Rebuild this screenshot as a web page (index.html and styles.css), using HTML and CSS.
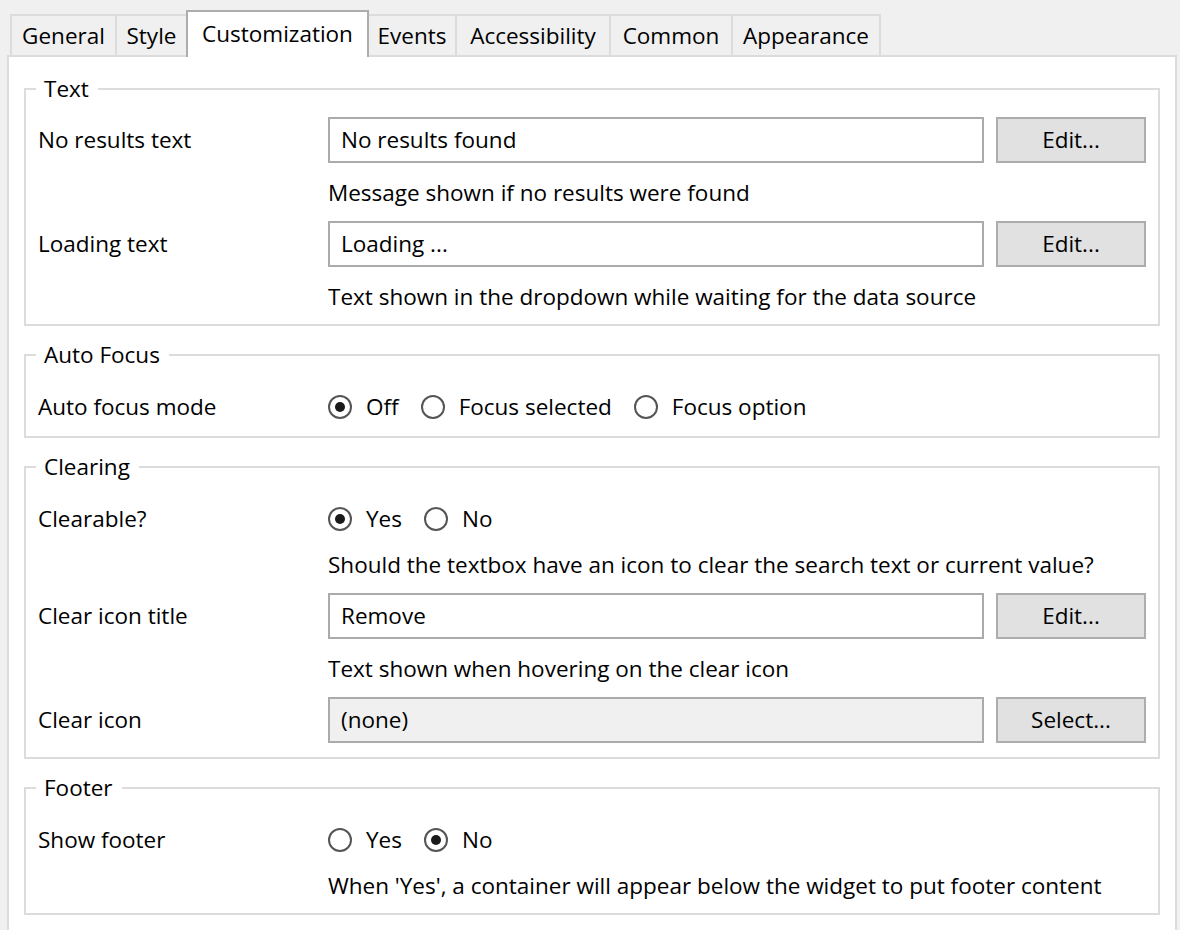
FILE: index.html
```html
<!DOCTYPE html>
<html lang="en">
<head>
<meta charset="utf-8">
<title>Customization</title>
<link rel="stylesheet" href="styles.css">
</head>
<body>
<div class="tabs">
  <div class="tab tab-general">General</div>
  <div class="tab tab-style">Style</div>
  <div class="tab tab-custom active">Customization</div>
  <div class="tab tab-events">Events</div>
  <div class="tab tab-access">Accessibility</div>
  <div class="tab tab-common">Common</div>
  <div class="tab tab-appearance">Appearance</div>
</div>
<div class="panel">
  <fieldset class="group">
    <legend>Text</legend>
    <div class="row">
      <div class="label">No results text</div>
      <div class="input">No results found</div>
      <div class="button">Edit...</div>
    </div>
    <div class="hint">Message shown if no results were found</div>
    <div class="row">
      <div class="label">Loading text</div>
      <div class="input">Loading ...</div>
      <div class="button">Edit...</div>
    </div>
    <div class="hint">Text shown in the dropdown while waiting for the data source</div>
  </fieldset>

  <fieldset class="group">
    <legend>Auto Focus</legend>
    <div class="row radio-row">
      <div class="label">Auto focus mode</div>
      <div class="radios">
        <span class="radio checked"></span><span class="radio-label">Off</span>
        <span class="radio"></span><span class="radio-label">Focus selected</span>
        <span class="radio"></span><span class="radio-label">Focus option</span>
      </div>
    </div>
  </fieldset>

  <fieldset class="group">
    <legend>Clearing</legend>
    <div class="row radio-row">
      <div class="label">Clearable?</div>
      <div class="radios">
        <span class="radio checked"></span><span class="radio-label">Yes</span>
        <span class="radio"></span><span class="radio-label">No</span>
      </div>
    </div>
    <div class="hint">Should the textbox have an icon to clear the search text or current value?</div>
    <div class="row">
      <div class="label">Clear icon title</div>
      <div class="input">Remove</div>
      <div class="button">Edit...</div>
    </div>
    <div class="hint">Text shown when hovering on the clear icon</div>
    <div class="row">
      <div class="label">Clear icon</div>
      <div class="input readonly">(none)</div>
      <div class="button">Select...</div>
    </div>
  </fieldset>

  <fieldset class="group">
    <legend>Footer</legend>
    <div class="row radio-row">
      <div class="label">Show footer</div>
      <div class="radios">
        <span class="radio"></span><span class="radio-label">Yes</span>
        <span class="radio checked"></span><span class="radio-label">No</span>
      </div>
    </div>
    <div class="hint">When 'Yes', a container will appear below the widget to put footer content</div>
  </fieldset>
</div>
</body>
</html>
```
FILE: styles.css
```css
html, body {
  margin: 0;
  padding: 0;
  background: #f0f0f0;
}

body {
  font-family: "Open Sans", "Noto Sans", sans-serif;
  font-size: 22.5px;
  line-height: 32px;
  color: #000;
  overflow: hidden;
}

.tabs {
  display: flex;
  align-items: flex-end;
  padding-left: 10px;
  height: 55px;
}

.tab {
  box-sizing: border-box;
  height: 41px;
  padding: 4px 0 3px;
  border: 2px solid #dcdcdc;
  border-bottom: none;
  background: #f0f0f0;
  margin-left: -2px;
  white-space: nowrap;
  text-align: center;
  flex: none;
}

.tab:first-child {
  margin-left: 0;
}

.tab-general { width: 107px; }
.tab-style { width: 73px; }
.tab-custom { width: 183px; }
.tab-events { width: 90px; }
.tab-access { width: 156px; }
.tab-common { width: 124px; }
.tab-appearance { width: 150px; }

.tab.active {
  position: relative;
  z-index: 1;
  height: 47px;
  margin-bottom: -2px;
  padding: 6px 0 3px;
  background: #fff;
  border-color: #adadad;
}

.panel {
  margin: 0 3px 0 7px;
  background: #fff;
  border: 2px solid #dcdcdc;
  padding: 16px 0 40px;
}

.group {
  margin: 0 15px 13px 15px;
  border: 2px solid #dcdcdc;
  padding: 12px 12px 11px 12px;
  min-width: 0;
}

.group legend {
  margin-left: -2px;
  padding: 0 9px 0 8px;
  line-height: 32px;
}

.row {
  display: grid;
  grid-template-columns: 278px 656px 150px;
  column-gap: 12px;
  height: 46px;
  align-items: center;
}

.row:last-child {
  margin-bottom: 3px;
}

.row.radio-row {
  height: 34px;
  margin-top: 7px;
  display: flex;
  column-gap: 0;
}

.row.radio-row:last-child {
  margin-bottom: 1px;
}

.radio-row .label {
  width: 290px;
  flex: none;
}

.input {
  box-sizing: border-box;
  height: 46px;
  border: 2px solid #ababab;
  background: #fff;
  padding: 5px 11px;
  white-space: nowrap;
}

.input.readonly {
  background: #f0f0f0;
}

.button {
  box-sizing: border-box;
  height: 46px;
  border: 2px solid #adadad;
  background: #e1e1e1;
  text-align: center;
  padding: 5px 0;
}

.hint {
  margin: 14px 0 12px 290px;
  white-space: nowrap;
}

.radio-row + .hint {
  margin-top: 13px;
}

.hint:last-child {
  margin-bottom: 0;
}

.radios {
  display: flex;
  align-items: center;
}

.radio {
  box-sizing: border-box;
  width: 24px;
  height: 24px;
  border: 2px solid #555;
  border-radius: 50%;
  background: #fff;
  display: flex;
  align-items: center;
  justify-content: center;
  flex: none;
}

.radio.checked::after {
  content: "";
  width: 10px;
  height: 10px;
  border-radius: 50%;
  background: #1a1a1a;
}

.radio-label {
  margin-left: 14px;
  margin-right: 22px;
}
```
